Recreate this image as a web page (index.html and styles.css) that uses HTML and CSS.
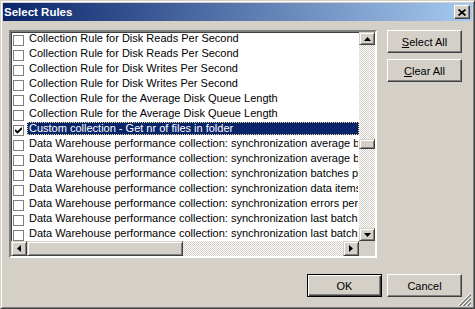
FILE: index.html
```html
<!DOCTYPE html>
<html lang="en">
<head>
  <meta charset="UTF-8">
  <title>Select Rules</title>
  <link rel="stylesheet" href="styles.css">
</head>
<body>
  <div class="window">
    <div class="titlebar">
      <span class="title">Select Rules</span>
      <span class="btn-close">
        <svg width="8" height="7" viewBox="0 0 8 7"><path d="M0.5 0.5 L7.5 6.5 M7.5 0.5 L0.5 6.5" stroke="#000" stroke-width="1.7" fill="none"/></svg>
      </span>
    </div>
    <div class="content">
      <div class="listbox">
        <ul class="rows">
          <li><span class="check"></span><span class="label">Collection Rule for Disk Reads Per Second</span></li>
          <li><span class="check"></span><span class="label">Collection Rule for Disk Reads Per Second</span></li>
          <li><span class="check"></span><span class="label">Collection Rule for Disk Writes Per Second</span></li>
          <li><span class="check"></span><span class="label">Collection Rule for Disk Writes Per Second</span></li>
          <li><span class="check"></span><span class="label">Collection Rule for the Average Disk Queue Length</span></li>
          <li><span class="check"></span><span class="label">Collection Rule for the Average Disk Queue Length</span></li>
          <li class="selected"><span class="check"><svg width="7" height="7" viewBox="0 0 7 7"><path d="M0 3 L2.5 5.5 L7 1" stroke="#000" stroke-width="1.8" fill="none"/></svg></span><span class="label">Custom collection - Get nr of files in folder</span></li>
          <li><span class="check"></span><span class="label">Data Warehouse performance collection: synchronization average batch size</span></li>
          <li><span class="check"></span><span class="label">Data Warehouse performance collection: synchronization average batch processing time</span></li>
          <li><span class="check"></span><span class="label">Data Warehouse performance collection: synchronization batches per second</span></li>
          <li><span class="check"></span><span class="label">Data Warehouse performance collection: synchronization data items per second</span></li>
          <li><span class="check"></span><span class="label">Data Warehouse performance collection: synchronization errors per second</span></li>
          <li><span class="check"></span><span class="label">Data Warehouse performance collection: synchronization last batch size</span></li>
          <li><span class="check"></span><span class="label">Data Warehouse performance collection: synchronization last batch processing time</span></li>
        </ul>
        <div class="vscroll">
          <span class="sbtn vbtn"><svg width="7" height="4"><polygon points="3.5,0 7,4 0,4" fill="#000"/></svg></span>
          <div class="vtrack"><span class="sbtn vthumb"></span></div>
          <span class="sbtn vbtn"><svg width="7" height="4"><polygon points="0,0 7,0 3.5,4" fill="#000"/></svg></span>
        </div>
        <div class="hscroll">
          <span class="sbtn hbtn"><svg width="4" height="7"><polygon points="4,0 4,7 0,3.5" fill="#000"/></svg></span>
          <span class="sbtn hthumb"></span>
          <span class="htrack"></span>
          <span class="sbtn hbtn"><svg width="4" height="7"><polygon points="0,0 4,3.5 0,7" fill="#000"/></svg></span>
        </div>
        <div class="corner"></div>
      </div>
      <div class="side">
        <a class="button" href="#"><u>S</u>elect All</a>
        <a class="button" href="#"><u>C</u>lear All</a>
      </div>
    </div>
    <div class="footer">
      <a class="button default" href="#">OK</a>
      <a class="button" href="#">Cancel</a>
    </div>
    <svg class="grip" width="13" height="13" viewBox="0 0 13 13" shape-rendering="crispEdges">
      <path d="M13 0 L0 13" stroke="#fff"/>
      <path d="M13 1 L1 13 M13 2 L2 13" stroke="#808080"/>
      <path d="M13 4 L4 13" stroke="#fff"/>
      <path d="M13 5 L5 13 M13 6 L6 13" stroke="#808080"/>
      <path d="M13 8 L8 13" stroke="#fff"/>
      <path d="M13 9 L9 13 M13 10 L10 13" stroke="#808080"/>
    </svg>
  </div>
</body>
</html>
```

FILE: styles.css
```css
ul,li{
  list-style: none;
  margin: 0;
  padding: 0;
}
a{
  text-decoration: none;
  color: #000;
}
body{
  margin: 0;
  background: #d4d0c8;
  font-family: "Liberation Sans", Arial, sans-serif;
  font-size: 11px;
}
.window{
  position: relative;
  box-sizing: border-box;
  width: 475px;
  height: 309px;
  padding: 2px;
  display: flex;
  flex-direction: column;
  background: #d4d0c8;
  border: 1px solid;
  border-color: #d4d0c8 #404040 #404040 #d4d0c8;
  box-shadow: inset 1px 1px #fff, inset -1px -1px #808080;
}
.titlebar{
  height: 18px;
  display: flex;
  align-items: center;
  justify-content: space-between;
  padding: 0 2px 0 1px;
  background: linear-gradient(to right, #0a246a, #a6caf0);
}
.title{
  color: #fff;
  font-weight: bold;
  font-size: 11.5px;
}
.btn-close{
  box-sizing: border-box;
  width: 16px;
  height: 14px;
  display: flex;
  align-items: center;
  justify-content: center;
  background: #d4d0c8;
  border: 1px solid;
  border-color: #fff #404040 #404040 #fff;
  box-shadow: inset -1px -1px #808080;
}
.content{
  display: flex;
  gap: 10px;
  padding: 9px 10px 0 6px;
}
.listbox{
  box-sizing: border-box;
  width: 368px;
  height: 228px;
  border: 2px solid;
  border-color: #808080 #fff #fff #808080;
  box-shadow: inset 1px 1px #404040, inset -1px -1px #d4d0c8;
  display: grid;
  grid-template-columns: 348px 16px;
  grid-template-rows: 209px 15px;
  background: #fff;
}
.rows{
  overflow: hidden;
}
.rows>li{
  height: 15px;
  display: flex;
  align-items: flex-start;
}
.check{
  box-sizing: border-box;
  width: 11px;
  height: 11px;
  margin: 3px 3px 0 2px;
  border: 1px solid #808080;
  background: #fff;
  display: flex;
  align-items: center;
  justify-content: center;
  flex: none;
}
.label{
  box-sizing: border-box;
  flex: 1;
  min-width: 0;
  height: 13px;
  line-height: 11px;
  padding-left: 1px;
  border: 1px solid transparent;
  white-space: nowrap;
  overflow: hidden;
}
.selected .label{
  background: #0a246a;
  color: #fff;
  border: 1px dotted #f5db95;
}
.sbtn{
  box-sizing: border-box;
  display: flex;
  align-items: center;
  justify-content: center;
  background: #d4d0c8;
  border: 1px solid;
  border-color: #d4d0c8 #404040 #404040 #d4d0c8;
  box-shadow: inset 1px 1px #fff, inset -1px -1px #808080;
}
.vscroll{
  display: flex;
  flex-direction: column;
}
.vbtn{
  height: 13px;
}
.vtrack,.htrack{
  flex: 1;
  background: repeating-conic-gradient(#fff 0 25%, #d4d0c8 0 50%) 0 0/2px 2px;
}
.vthumb{
  height: 10px;
  margin-top: 94px;
}
.hscroll{
  display: flex;
}
.hbtn{
  width: 16px;
}
.hthumb{
  width: 156px;
}
.corner{
  background: #d4d0c8;
}
.side{
  display: flex;
  flex-direction: column;
  gap: 6px;
  padding-top: 0;
}
.button{
  box-sizing: border-box;
  width: 75px;
  height: 23px;
  display: flex;
  align-items: center;
  justify-content: center;
  background: #d4d0c8;
  border: 1px solid;
  border-color: #fff #404040 #404040 #fff;
  box-shadow: inset -1px -1px #808080;
}
.button.default{
  border-color: #000;
  box-shadow: inset 1px 1px #fff, inset -1px -1px #404040, inset -2px -2px #808080;
}
.footer{
  margin-top: auto;
  display: flex;
  justify-content: flex-end;
  gap: 5px;
  padding: 0 10px 9px 0;
}
.grip{
  position: absolute;
  right: 3px;
  bottom: 2px;
}
```
